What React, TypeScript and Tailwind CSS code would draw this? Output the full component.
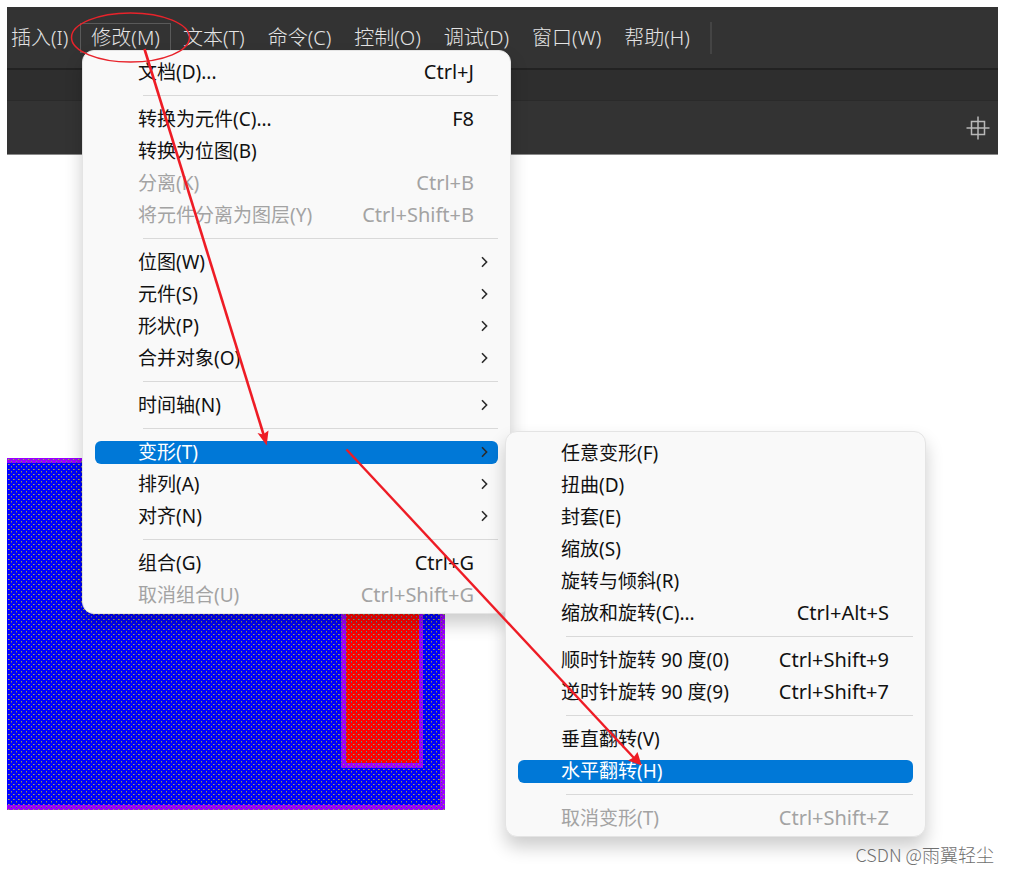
import React from "react";

type Entry =
  | { kind: "item"; label: string; shortcut?: string; disabled?: boolean; sub?: boolean; active?: boolean }
  | { kind: "sep" };

const sep: Entry = { kind: "sep" };
const item = (label: string, rest: { shortcut?: string; disabled?: boolean; sub?: boolean; active?: boolean } = {}): Entry => ({
  kind: "item",
  label,
  ...rest,
});

const topMenus = ["插入(I)", "修改(M)", "文本(T)", "命令(C)", "控制(O)", "调试(D)", "窗口(W)", "帮助(H)"];

const modifyMenu: Entry[] = [
  item("文档(D)...", { shortcut: "Ctrl+J" }),
  sep,
  item("转换为元件(C)...", { shortcut: "F8" }),
  item("转换为位图(B)"),
  item("分离(K)", { shortcut: "Ctrl+B", disabled: true }),
  item("将元件分离为图层(Y)", { shortcut: "Ctrl+Shift+B", disabled: true }),
  sep,
  item("位图(W)", { sub: true }),
  item("元件(S)", { sub: true }),
  item("形状(P)", { sub: true }),
  item("合并对象(O)", { sub: true }),
  sep,
  item("时间轴(N)", { sub: true }),
  sep,
  item("变形(T)", { sub: true, active: true }),
  item("排列(A)", { sub: true }),
  item("对齐(N)", { sub: true }),
  sep,
  item("组合(G)", { shortcut: "Ctrl+G" }),
  item("取消组合(U)", { shortcut: "Ctrl+Shift+G", disabled: true }),
];

const transformMenu: Entry[] = [
  item("任意变形(F)"),
  item("扭曲(D)"),
  item("封套(E)"),
  item("缩放(S)"),
  item("旋转与倾斜(R)"),
  item("缩放和旋转(C)...", { shortcut: "Ctrl+Alt+S" }),
  sep,
  item("顺时针旋转 90 度(0)", { shortcut: "Ctrl+Shift+9" }),
  item("逆时针旋转 90 度(9)", { shortcut: "Ctrl+Shift+7" }),
  sep,
  item("垂直翻转(V)"),
  item("水平翻转(H)", { active: true }),
  sep,
  item("取消变形(T)", { shortcut: "Ctrl+Shift+Z", disabled: true }),
];

function Menu({ entries, name, className }: { entries: Entry[]; name: string; className: string }) {
  return (
    <div
      role="menu"
      aria-label={name}
      className={`absolute rounded-xl border border-[#e4e4e4] bg-[#f9f9f9] px-3 pt-[5px] pb-[2px] shadow-[0_10px_18px_rgba(0,0,0,0.2)] ${className}`}
    >
      {entries.map((e, i) =>
        e.kind === "sep" ? (
          <div key={i} role="separator" className="flex h-[15px] items-center pl-12">
            <div className="h-px w-full bg-[#d9d9d9]" />
          </div>
        ) : (
          <div key={i} className="flex h-8 items-center">
            <button
              type="button"
              role="menuitem"
              disabled={e.disabled}
              className={`flex h-[23px] w-full items-center justify-between rounded-md pl-[43px] text-left text-[19px] leading-6 whitespace-pre ${
                e.sub ? "pr-2" : "pr-6"
              } ${e.active ? "bg-[#0078d7] text-white" : e.disabled ? "text-[#a3a3a3]" : "text-[#111111]"}`}
            >
              <span>{e.label}</span>
              {e.shortcut && <span className="text-[20px]">{e.shortcut}</span>}
              {e.sub && (
                <svg width="12" height="12" viewBox="0 0 12 12" fill="none" stroke="#2b2b2b" strokeWidth="1.6" aria-hidden="true">
                  <path d="M4 1.2 8.6 6 4 10.8" />
                </svg>
              )}
            </button>
          </div>
        )
      )}
    </div>
  );
}

function Artwork() {
  return (
    <svg width="438" height="352" viewBox="0 0 438 352" aria-hidden="true" shapeRendering="crispEdges">
      <defs>
        <pattern id="dots" width="5" height="5" patternUnits="userSpaceOnUse">
          <rect x="1" y="1" width="1" height="1" fill="#a8a850" />
          <rect x="2" y="1" width="1" height="1" fill="#6c6c80" />
          <rect x="4" y="3" width="1" height="1" fill="#8c8c68" />
          <rect x="4" y="4" width="1" height="1" fill="#505090" />
        </pattern>
      </defs>
      <rect width="438" height="352" fill="#9a00ff" />
      <rect y="5" width="433" height="342" fill="#0000ff" />
      <rect x="334" y="60" width="82" height="250" fill="#9a00ff" />
      <rect x="339" y="60" width="73" height="245" fill="#ff0000" />
      <rect width="438" height="352" fill="url(#dots)" />
    </svg>
  );
}

export default function App() {
  return (
    <div className="relative min-h-screen overflow-hidden bg-white pt-[7px] pr-[11px] pl-[7px] font-['Noto_Sans','Noto_Sans_CJK_SC',sans-serif]">
      <header className="border-b border-[#8a8a8a] bg-[#333333]">
        <nav
          aria-label="主菜单"
          className="flex h-[63px] items-center gap-px border-b-2 border-[#222222] text-[20px] leading-7 font-light text-[#e4e4e4]"
        >
          {topMenus.map((m) => (
            <button
              key={m}
              type="button"
              className={`border px-[10px] whitespace-nowrap first:-ml-[7px] ${
                m === "修改(M)" ? "border-[#5a5a5a]" : "border-transparent"
              }`}
            >
              {m}
            </button>
          ))}
          <div className="ml-2 h-8 w-[2px] bg-[#444444]" />
        </nav>
        <div className="h-[31px] border-b border-[#2a2a2a] bg-[#2e2e2e]" />
        <div className="flex h-[53px] items-center justify-end pr-2">
          <svg width="24" height="24" viewBox="0 0 24 24" fill="none" stroke="#b8b8b8" strokeWidth="1.5" aria-hidden="true">
            <path d="M5.5 5.5h13v13h-13zM12 .5v23M.5 12h23" />
          </svg>
        </div>
      </header>
      <main className="pt-[303px]">
        <Artwork />
      </main>

      <Menu entries={modifyMenu} name="修改" className="top-[50px] left-[82px] w-[429px]" />
      <Menu entries={transformMenu} name="变形" className="top-[431px] left-[505px] w-[421px]" />

      <svg className="pointer-events-none absolute top-0 left-0" width="1009" height="872" viewBox="0 0 1009 872" fill="none" aria-hidden="true">
        <ellipse cx="130.5" cy="37.5" rx="59" ry="24.5" stroke="#e8232b" strokeWidth="1.5" />
        <path d="M144.5 49 264 436" stroke="#ee1c25" strokeWidth="2.6" />
        <path d="M266.7 445.5 257.5 433 263 434.5 268.5 430.5z" fill="#ee1c25" />
        <path d="M346.5 449.5 634 758" stroke="#ee1c25" strokeWidth="2.4" />
        <path d="M641.7 765.5 628 760.5 633.5 757.5 637.5 752z" fill="#ee1c25" />
      </svg>

      <div className="absolute right-[15px] bottom-1 font-['Noto_Sans_CJK_SC',sans-serif] text-[18px] leading-7 font-light text-[#6f6f6f]">
        CSDN @雨翼轻尘
      </div>
    </div>
  );
}
